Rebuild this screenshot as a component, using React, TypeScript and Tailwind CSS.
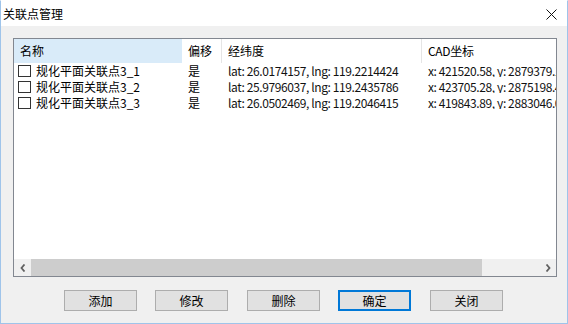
import React from 'react';

type Point = { name: string; offset: string; latlng: string; cad: string };

const points: Point[] = [
  { name: '规化平面关联点3_1', offset: '是', latlng: 'lat: 26.0174157, lng: 119.2214424', cad: 'x: 421520.58, y: 2879379.12' },
  { name: '规化平面关联点3_2', offset: '是', latlng: 'lat: 25.9796037, lng: 119.2435786', cad: 'x: 423705.28, y: 2875198.44' },
  { name: '规化平面关联点3_3', offset: '是', latlng: 'lat: 26.0502469, lng: 119.2046415', cad: 'x: 419843.89, y: 2883046.07' },
];

const buttons = [
  { label: '添加', cls: 'ml-[63px] border-[#adadad]' },
  { label: '修改', cls: 'ml-[18px] border-[#adadad]' },
  { label: '删除', cls: 'ml-[19px] border-[#adadad]' },
  { label: '确定', cls: 'ml-[18px] border-[#0078d7] border-2' },
  { label: '关闭', cls: 'ml-[19px] border-[#adadad]' },
];

export default function App() {
  return (
    <div className="w-[568px] h-[324px] border border-[#9fc4ea] border-t-white bg-[#f0f0f0] flex flex-col font-['Noto_Sans_CJK_SC',sans-serif] text-[12px] text-black overflow-hidden">
      {/* title bar */}
      <div className="h-[25px] bg-white flex items-center justify-between pl-[2px] pr-[10px] shrink-0">
        <span className="leading-none">关联点管理</span>
        <svg width="11" height="11" viewBox="0 0 11 11" className="mt-[1px]">
          <path d="M0.5 0.5 L10.5 10.5 M10.5 0.5 L0.5 10.5" stroke="#111" strokeWidth="1" />
        </svg>
      </div>

      {/* body */}
      <div className="flex-1 flex flex-col pt-[12px] pl-[12px] pr-[10px]">
        <div className="w-[544px] h-[239px] border border-[#828790] bg-white flex flex-col overflow-hidden">
          {/* header */}
          <div className="h-[24px] flex shrink-0 whitespace-nowrap">
            <div className="w-[168px] bg-[#d9ebf9] flex items-center pl-[6px]">名称</div>
            <div className="w-[40px] flex items-center pl-[6px] border-r border-[#e5e5e5]">偏移</div>
            <div className="w-[200px] flex items-center pl-[6px] border-r border-[#e5e5e5]">经纬度</div>
            <div className="flex-1 flex items-center pl-[6px] tracking-[-0.3px]">CAD坐标</div>
          </div>

          {/* rows */}
          <div className="flex-1 whitespace-nowrap">
            {points.map((p) => (
              <div key={p.name} className="h-[16px] flex items-center">
                <div className="w-[168px] flex items-center pl-[4px]">
                  <span className="w-[13px] h-[12px] border border-[#333] bg-white shrink-0" />
                  <span className="ml-[5px] leading-none">{p.name}</span>
                </div>
                <div className="w-[40px] pl-[6px] leading-none">{p.offset}</div>
                <div className="w-[200px] pl-[6px] leading-none text-[#111] tracking-[-0.4px]">{p.latlng}</div>
                <div className="flex-1 pl-[6px] leading-none text-[#111] tracking-[-0.4px] overflow-hidden">{p.cad}</div>
              </div>
            ))}
          </div>

          {/* horizontal scrollbar */}
          <div className="h-[17px] flex bg-[#f0f0f0] shrink-0">
            <div className="w-[17px] flex items-center justify-center">
              <svg width="6" height="8" viewBox="0 0 6 8">
                <path d="M4.5 0.5 L1.5 4 L4.5 7.5" stroke="#606060" strokeWidth="1.8" fill="none" />
              </svg>
            </div>
            <div className="w-[451px] bg-[#cdcdcd]" />
            <div className="flex-1" />
            <div className="w-[17px] flex items-center justify-center">
              <svg width="6" height="8" viewBox="0 0 6 8">
                <path d="M1.5 0.5 L4.5 4 L1.5 7.5" stroke="#606060" strokeWidth="1.8" fill="none" />
              </svg>
            </div>
          </div>
        </div>

        {/* buttons */}
        <div className="flex mt-[13px] -ml-[12px]">
          {buttons.map((b) => (
            <button
              key={b.label}
              className={`w-[73px] h-[21px] bg-[#e1e1e1] border flex items-center justify-center leading-none ${b.cls}`}
            >
              {b.label}
            </button>
          ))}
        </div>
      </div>
    </div>
  );
}
